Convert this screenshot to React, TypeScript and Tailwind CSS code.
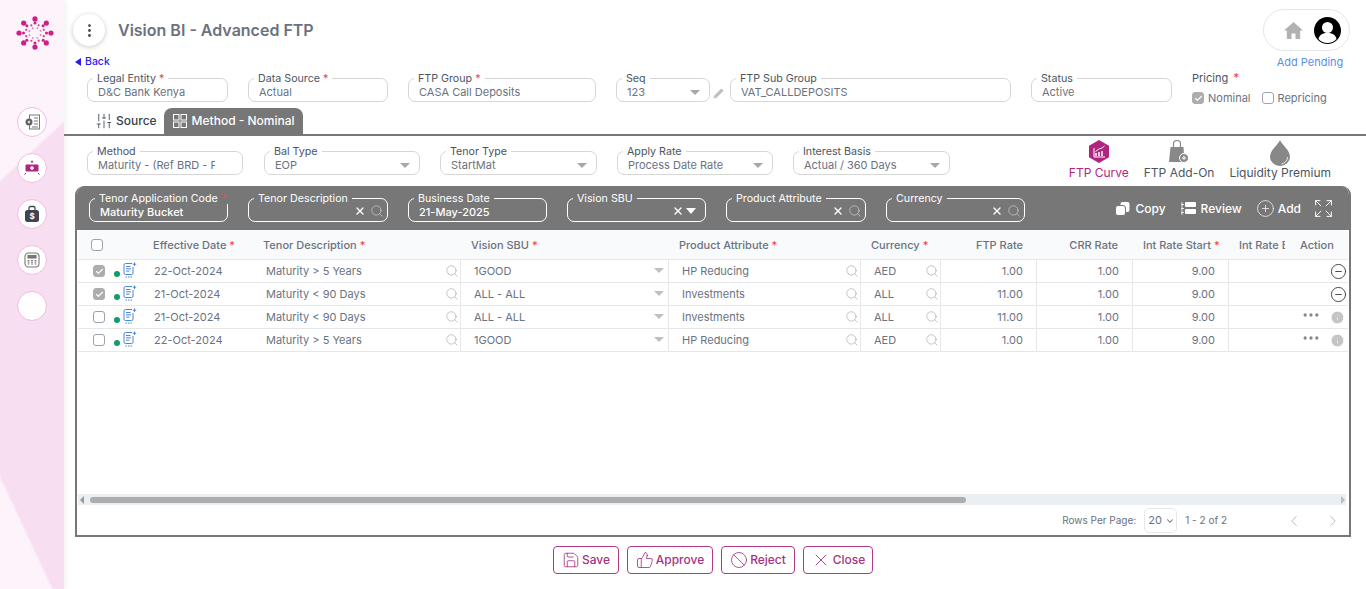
import React from "react";
import { Search, X, Save, ThumbsUp, Ban, ChevronLeft, ChevronRight, ChevronDown, SlidersHorizontal, CirclePlus, Expand, CircleMinus, Ellipsis, Info, Check, EllipsisVertical } from "lucide-react";

const Star = () => <span className="text-[#ef4444] ml-[3px]">*</span>;

function Tri({ className = "" }: { className?: string }) {
  return <span className={`inline-block shrink-0 w-0 h-0 border-x-[5px] border-x-transparent border-t-[5px] border-t-[#a8a8a8] ${className}`} />;
}

function Field({ label, value, req, width, right, dark, tight, className = "" }: { label: string; value?: string; req?: boolean; width: string; right?: React.ReactNode; dark?: boolean; tight?: boolean; className?: string }) {
  return (
    <fieldset className={`${width} h-[29px] border rounded-[7px] shrink-0 pl-[10px] ${tight ? "pr-[3px]" : "pr-[9px]"} min-w-0 relative ${dark ? "border-white" : "border-[#d6d6d6]"} ${className}`}>
      <legend className={`text-[10.7px] leading-[11px] px-[4px] ml-[-5px] whitespace-nowrap ${dark ? "text-white" : "text-[#4b5563]"}`}>
        {label}{req && <Star />}
      </legend>
      <div className={`flex items-center justify-between text-[11px] leading-[14px] mt-[1px] whitespace-nowrap ${dark ? "text-white font-medium" : "text-[#6b7280]"}`}>
        <span className="overflow-hidden min-w-0">{value}&nbsp;</span>
        {right}
      </div>
    </fieldset>
  );
}

const ClearSearch = () => (
  <span className="flex items-center gap-[4px] text-white shrink-0 h-[14px] -mt-[2px]">
    <X size={12} strokeWidth={2.75} />
    <Search size={14} strokeWidth={1} className="text-[#e0e0e0]" />
  </span>
);

function NoteIcon() {
  return (
    <svg width="14" height="16" viewBox="0 0 14 16" fill="none" stroke="#4a86d8" strokeWidth="1" className="block">
      <path d="M9 1.500H2.500A1.500 1.500 0 0 0 1 3v8a1.500 1.500 0 0 0 1.500 1.500h6A1.500 1.500 0 0 0 10 11V5" />
      <path d="M3 4.500h4.500M3 6.800h5M3 9.100h3.500" />
      <path d="M11.500 .5v3.500M9.800 2.200h3.400" />
      <path d="M2.500 15h1.500M5 15h1.500M7.500 15h1.500" />
    </svg>
  );
}

type Row = { date: string; tenor: string; sbu: string; prod: string; cur: string; ftp: string; checked: boolean };
const rows: Row[] = [
  { date: "22-Oct-2024", tenor: "Maturity > 5 Years", sbu: "1GOOD", prod: "HP Reducing", cur: "AED", ftp: "1.00", checked: true },
  { date: "21-Oct-2024", tenor: "Maturity < 90 Days", sbu: "ALL - ALL", prod: "Investments", cur: "ALL", ftp: "11.00", checked: true },
  { date: "21-Oct-2024", tenor: "Maturity < 90 Days", sbu: "ALL - ALL", prod: "Investments", cur: "ALL", ftp: "11.00", checked: false },
  { date: "22-Oct-2024", tenor: "Maturity > 5 Years", sbu: "1GOOD", prod: "HP Reducing", cur: "AED", ftp: "1.00", checked: false },
];

const cols = "grid grid-cols-[67px_111px_205px_208px_192px_80px_96px_96px_96px_56px_63px]";

function Checkbox({ checked }: { checked?: boolean }) {
  return (
    <span className={`w-[12px] h-[12px] rounded-[3px] border flex items-center justify-center shrink-0 ${checked ? "bg-[#adadad] border-[#adadad]" : "bg-white border-[#9ca3af]"}`}>
      {checked && <Check size={9} strokeWidth={3} className="text-white" />}
    </span>
  );
}

function Head({ children, className = "" }: { children: React.ReactNode; className?: string }) {
  return <div className={`text-[11px] text-[#6b7280] font-medium whitespace-nowrap overflow-hidden flex items-center pt-[1px] ${className}`}>{children}</div>;
}

function Lens() {
  return <Search size={14} strokeWidth={0.9} className="text-[#8f8f8f] absolute right-[1px] top-[4px]" />;
}

function SideBtn({ children }: { children?: React.ReactNode }) {
  return <div className="w-[30px] h-[30px] rounded-full border border-[#f5b8e2] bg-white flex items-center justify-center">{children}</div>;
}

function Logo() {
  const big = [0, 45, 90, 135, 180, 225, 270, 315];
  return (
    <svg width="38" height="34" viewBox="-19 -17 38 34" fill="#cf1f87">
      {big.map((a) => {
        const r = (a * Math.PI) / 180;
        const ry = 0.88;
        return (
          <g key={a}>
            <circle cx={Math.cos(r) * 16} cy={Math.sin(r) * 16 * ry} r="2.600" />
            <circle cx={Math.cos(r) * 11.500} cy={Math.sin(r) * 11.500 * ry} r="1.500" />
            <circle cx={Math.cos(r + 0.39) * 9.500} cy={Math.sin(r + 0.39) * 9.500 * ry} r="1.100" fill="#d93d98" />
            <circle cx={Math.cos(r + 0.39) * 6} cy={Math.sin(r + 0.39) * 6 * ry} r="0.900" fill="#e877b8" />
          </g>
        );
      })}
    </svg>
  );
}

function Toolbtn({ icon, label, color = "text-[#4b5563]" }: { icon: React.ReactNode; label: string; color?: string }) {
  return (
    <div className="flex flex-col items-center">
      <div className="h-[26px] flex items-start">{icon}</div>
      <span className={`text-[12px] leading-[14px] whitespace-nowrap ${color}`}>{label}</span>
    </div>
  );
}

function ActBtn({ icon, label, width }: { icon: React.ReactNode; label: string; width: string }) {
  return (
    <button className={`${width} h-[28px] rounded-[4px] border border-[#b03a8c] flex items-center justify-center gap-[2px] text-[12px] text-[#a8327f] font-medium bg-white`}>
      {icon}{label}
    </button>
  );
}

export default function App() {
  return (
    <div className="w-[1366px] h-[589px] overflow-hidden flex bg-white font-['Inter','Liberation_Sans',sans-serif]">
      <aside className="w-[64px] h-full shrink-0 flex flex-col items-center shadow-[2px_0_6px_rgba(0,0,0,0.06)] bg-[linear-gradient(137deg,#fdf3fb_131px,transparent_134px),linear-gradient(245deg,transparent_258px,#fdf3fb_261px),linear-gradient(#f7dff1,#f7dff1)]">
        <div className="mt-[16px] mb-[57px] ml-[6px]"><Logo /></div>
        <div className="flex flex-col gap-[16px]">
          <SideBtn>
            <svg width="18" height="16" viewBox="0 0 18 16">
              <rect x="6.500" y="1" width="10" height="14" fill="#fff" stroke="#777" strokeWidth="1" />
              <path d="M11 4h4M11 7h4M11 10h4M9 13h6" stroke="#777" />
              <circle cx="6" cy="8" r="3.500" fill="#666" />
              <circle cx="6" cy="8" r="1.200" fill="#ddd" />
            </svg>
          </SideBtn>
          <SideBtn>
            <svg width="18" height="18" viewBox="0 0 18 18" fill="#b0267f">
              <rect x="2.500" y="5.500" width="13" height="7" rx="1" />
              <circle cx="9" cy="9" r="1.800" fill="#fff" />
              <path d="M9 1.500v2.500M7.800 2.700h2.400M3 14l-1.500 1.500M15 14l1.500 1.500" stroke="#b0267f" fill="none" />
            </svg>
          </SideBtn>
          <SideBtn>
            <svg width="16" height="18" viewBox="0 0 16 18">
              <path d="M5 5V3a1.500 1.500 0 0 1 1.500-1.500h3A1.500 1.500 0 0 1 11 3v2" fill="none" stroke="#3f4650" strokeWidth="1.300" />
              <rect x="1" y="5" width="14" height="12" rx="2.500" fill="#3f4650" />
              <text x="8" y="14" textAnchor="middle" fontSize="8" fontWeight="700" fill="#fff" fontFamily="Inter">$</text>
            </svg>
          </SideBtn>
          <SideBtn>
            <svg width="16" height="16" viewBox="0 0 16 16" fill="none" stroke="#777" strokeWidth="1.100">
              <rect x="1" y="1" width="14" height="14" rx="3.500" />
              <rect x="4" y="3.500" width="8" height="2.500" fill="#777" />
              <path d="M4.500 8v5M8 8v5M11.500 8v5" strokeWidth="1.800" strokeDasharray="1.400 .8" />
            </svg>
          </SideBtn>
          <SideBtn />
        </div>
      </aside>

      <main className="flex-1 min-w-0 flex flex-col">
        {/* header */}
        <div className="flex h-[78px] shrink-0 pl-[9px] pr-[16px]">
          <div className="flex-1 flex flex-col">
            <div className="flex items-center mt-[14px]">
              <div className="w-[32px] h-[32px] rounded-full bg-white shadow-[0_1px_5px_rgba(0,0,0,0.22)] flex items-center justify-center">
                <EllipsisVertical size={17} className="text-[#444]" />
              </div>
              <h1 className="ml-[13px] text-[16px] font-semibold text-[#6b7280]">Vision BI - Advanced FTP</h1>
            </div>
            <div className="mt-[9px] flex items-center text-[10.5px] leading-[14px] text-[#2a1cf0] font-medium">
              <span className="w-0 h-0 border-y-[4px] border-y-transparent border-r-[6px] border-r-[#2a1cf0] ml-[2px] mr-[4px]" />Back
            </div>
          </div>
          <div className="w-[87px] flex flex-col items-center mt-[9px]">
            <div className="w-[87px] h-[42px] rounded-[21px] border border-[#e5e7eb] flex items-center justify-end pr-[8px] gap-[11px]">
              <svg width="19" height="17" viewBox="0 0 19 17" fill="#b2b2b2"><path d="M9.500 0 0 8.500h2.800V17h4.700v-5.500h4V17h4.700V8.500H19z" /></svg>
              <svg width="27" height="27" viewBox="0 0 27 27">
                <circle cx="13.500" cy="13.500" r="13.500" fill="#000" />
                <circle cx="13.500" cy="10.500" r="5.500" fill="#fff" />
                <path d="M4.500 22c1-4.500 4.500-6 9-6s8 1.500 9 6a12 12 0 0 1-18 0z" fill="#fff" />
              </svg>
            </div>
            <span className="text-[11px] leading-[14px] text-[#5b8fe8] mt-[4px] ml-[7px] whitespace-nowrap">Add Pending</span>
          </div>
        </div>

        {/* form row */}
        <div className="flex h-[33px] shrink-0 pl-[23px] -mt-[5px] items-start">
          <Field label="Legal Entity" req value="D&C Bank Kenya" width="w-[141px]" />
          <Field label="Data Source" req value="Actual" width="w-[140px]" className="ml-[20px]" />
          <Field label="FTP Group" req value="CASA Call Deposits" width="w-[188px]" className="ml-[20px]" />
          <Field label="Seq" value="123" width="w-[94px]" className="ml-[20px]" right={<Tri />} />
          <svg width="11" height="11" viewBox="0 0 11 11" className="ml-[3px] mt-[15px] shrink-0" fill="#c0c0c0">
            <path d="M8.300.4 10.600 2.700 3.600 9.700.4 10.600 1.300 7.400z" />
          </svg>
          <Field label="FTP Sub Group" value="VAT_CALLDEPOSITS" width="w-[281px]" className="ml-[6px]" />
          <Field label="Status" value="Active" width="w-[141px]" className="ml-[20px]" />
          <div className="ml-[20px] -mt-[2px] flex flex-col">
            <span className="text-[11px] leading-[14px] text-[#4b5563]">Pricing <span className="text-[#ef4444] text-[12px] ml-[2px]">*</span></span>
            <div className="flex items-center mt-[6px] text-[11px] leading-[14px] text-[#6b7280]">
              <Checkbox checked />
              <span className="ml-[4px]">Nominal</span>
              <span className="ml-[11px]"><Checkbox /></span>
              <span className="ml-[4px]">Repricing</span>
            </div>
          </div>
        </div>

        {/* tabs */}
        <div className="flex items-end h-[30px] shrink-0 border-b-2 border-[#777] pl-[31px]">
          <div className="flex items-center h-[26px] gap-[3px] text-[12px] text-[#374151] font-medium">
            <SlidersHorizontal size={18} strokeWidth={1.1} className="rotate-90" />Source
          </div>
          <div className="ml-[7px] h-[26px] w-[139px] rounded-t-[8px] bg-[#777] flex items-center pl-[9px] gap-[5px] text-[12px] text-white font-medium">
            <svg width="14" height="14" viewBox="0 0 14 14" fill="none" stroke="#fff" strokeWidth="1"><rect x=".5" y=".5" width="5.500" height="5.500" /><rect x="8" y=".5" width="5.500" height="5.500" /><rect x=".5" y="8" width="5.500" height="5.500" /><rect x="8" y="8" width="5.500" height="5.500" /></svg>
            Method - Nominal
          </div>
        </div>

        {/* method row */}
        <div className="flex items-start h-[50px] shrink-0 pl-[23px] pr-[35px]">
          <div className="flex items-start mt-[10px]">
            <Field label="Method" value="Maturity - (Ref BRD - F" width="w-[156px]" right={<span className="w-[18px] shrink-0" />} />
            <Field label="Bal Type" value="EOP" width="w-[156px]" className="ml-[21px]" right={<Tri />} />
            <Field label="Tenor Type" value="StartMat" width="w-[157px]" className="ml-[20px]" right={<Tri />} />
            <Field label="Apply Rate" value="Process Date Rate" width="w-[156px]" className="ml-[20px]" right={<Tri />} />
            <Field label="Interest Basis" value="Actual / 360 Days" width="w-[157px]" className="ml-[20px]" right={<Tri />} />
          </div>
          <div className="flex ml-auto mt-[4px] gap-[15px]">
            <Toolbtn
              color="text-[#b0267f]"
              label="FTP Curve"
              icon={
                <svg width="20" height="23" viewBox="0 0 20 23">
                  <path d="M10 0 20 5.700v11.600L10 23 0 17.300V5.700z" fill="#b0267f" />
                  <path d="M5 8v9h11" fill="none" stroke="#fff" />
                  <path d="M7 16v-3M10 16v-4M13 16v-5" stroke="#fff" strokeWidth="1.500" />
                  <path d="M6.500 11.500 10 9l3-1 2.500-2" fill="none" stroke="#fff" strokeWidth=".9" />
                </svg>
              }
            />
            <Toolbtn
              label="FTP Add-On"
              icon={
                <svg width="20" height="23" viewBox="0 0 20 23">
                  <path d="M4.500 7V4a3.500 3.500 0 0 1 7 0v3" fill="none" stroke="#888" strokeWidth="1.200" />
                  <path d="M1.500 7h13l1 15H0z" fill="#888" />
                  <circle cx="15" cy="18" r="4.500" fill="#888" stroke="#fff" />
                  <path d="M12.800 18h4.400M15 15.800v4.400" stroke="#fff" />
                </svg>
              }
            />
            <Toolbtn
              label="Liquidity Premium"
              icon={
                <svg width="20" height="26" viewBox="0 0 20 26">
                  <path d="M10 0c2 5 10 10 10 17a10 9 0 0 1-20 0C0 10 8 5 10 0z" fill="#888" />
                  <path d="M17.500 17a7.500 7 0 0 1-6 7" fill="none" stroke="#fff" strokeWidth=".8" />
                </svg>
              }
            />
          </div>
        </div>

        {/* grid card */}
        <div className="ml-[11px] mr-[15px] h-[351px] shrink-0 rounded-t-[9px] border-2 border-t-0 border-[#777] bg-white flex flex-col overflow-hidden">
          <div className="h-[44px] shrink-0 bg-[#777] flex items-start pl-[12px] pr-[15px] pt-[7px]">
            <Field dark label="Tenor Application Code" req value="Maturity Bucket" width="w-[139px]" />
            <Field dark tight label="Tenor Description" width="w-[140px]" className="ml-[20px]" right={<ClearSearch />} />
            <Field dark label="Business Date" value="21-May-2025" width="w-[139px]" className="ml-[20px]" />
            <Field dark label="Vision SBU" width="w-[139px]" className="ml-[20px]" right={
              <span className="flex items-center gap-[2px] shrink-0 h-[14px] -mt-[2px]"><X size={12} strokeWidth={2.75} className="text-white" /><span className="w-0 h-0 border-x-[5px] border-x-transparent border-t-[6px] border-t-white" /></span>
            } />
            <Field dark tight label="Product Attribute" width="w-[140px]" className="ml-[20px]" right={<ClearSearch />} />
            <Field dark tight label="Currency" width="w-[139px]" className="ml-[20px]" right={<ClearSearch />} />
            <div className="flex items-center ml-auto mt-[5px] h-[21px] text-[12px] text-white font-medium">
              <svg width="15" height="14" viewBox="0 0 15 14" className="mr-[5px]">
                <rect x="5.500" y="0" width="9" height="10" rx="2" fill="#fff" />
                <rect x=".5" y="3.500" width="10" height="10" rx="2.500" fill="#fff" stroke="#777" />
              </svg>
              Copy
              <svg width="15" height="13" viewBox="0 0 15 13" fill="#fff" className="ml-[15px] mr-[5px]"><rect x="4" y="0" width="11" height="5" rx="1" /><rect x="4" y="7" width="11" height="5" rx="1" /><path d="M1 0v13M0 2.500h3M0 6.500h3M0 10.500h3" stroke="#fff" fill="none" strokeWidth=".8" /></svg>
              Review
              <CirclePlus size={19} strokeWidth={0.9} className="ml-[14px] mr-[3px]" />
              Add
              <Expand size={21} strokeWidth={1.1} className="ml-[12px]" />
            </div>
          </div>

          <div className="flex-1 min-h-0 overflow-hidden ml-[1px]">
            <div className={`${cols} h-[30px] bg-[#f9fafb] border-b border-[#e5e7eb] rounded-t-[4px] w-[1270px]`}>
              <div className="flex items-center pl-[13px]"><Checkbox /></div>
              <Head className="pl-[8px]">Effective Date<Star /></Head>
              <Head className="pl-[7px]">Tenor Description<Star /></Head>
              <Head className="pl-[10px]">Vision SBU<Star /></Head>
              <Head className="pl-[10px]">Product Attribute<Star /></Head>
              <Head className="pl-[10px]">Currency<Star /></Head>
              <Head className="justify-end pr-[14px]">FTP Rate</Head>
              <Head className="justify-end pr-[15px]">CRR Rate</Head>
              <Head className="pl-[10px]">Int Rate Start<Star /></Head>
              <Head className="pl-[10px]">Int Rate End</Head>
              <Head className="pl-[15px]">Action</Head>
            </div>
            {rows.map((r, i) => (
              <div key={i} className={`${cols} h-[23px] border-b border-[#e5e7eb] text-[11px] text-[#6b7280] w-[1270px]`}>
                <div className="flex items-center pl-[15px]">
                  <Checkbox checked={r.checked} />
                  <span className="w-[6px] h-[6px] rounded-full bg-[#0f9d6b] ml-[9px] mt-[5px]" />
                  <span className="ml-[3px] -mt-[2px]"><NoteIcon /></span>
                </div>
                <div className="flex items-center pl-[9px]">{r.date}</div>
                <div className="flex items-center pl-[10px] relative border-r border-[#e5e7eb]">{r.tenor}<Lens /></div>
                <div className="flex items-center pl-[13px] relative border-r border-[#e5e7eb]">
                  {r.sbu}<Tri className="absolute right-[4px] top-[8px] !border-t-[#c0c0c0]" />
                </div>
                <div className="flex items-center pl-[13px] relative border-r border-[#e5e7eb]">{r.prod}<Lens /></div>
                <div className="flex items-center pl-[13px] relative border-r border-[#e5e7eb]">{r.cur}<Lens /></div>
                <div className="flex items-center justify-end pr-[13px] border-r border-[#e5e7eb]">{r.ftp}</div>
                <div className="flex items-center justify-end pr-[13px] border-r border-[#e5e7eb]">1.00</div>
                <div className="flex items-center justify-end pr-[13px] border-r border-[#e5e7eb]">9.00</div>
                <div />
                <div className="flex items-center justify-end">
                  {r.checked ? (
                    <CircleMinus size={17} strokeWidth={1.25} className="text-[#333] mr-[1px]" />
                  ) : (
                    <span className="flex items-center gap-[9px] mr-[3px]">
                      <Ellipsis size={20} strokeWidth={2} className="text-[#888] -mt-[4px]" />
                      <Info size={15} fill="#c4c4c4" strokeWidth={1} className="text-white" />
                    </span>
                  )}
                </div>
              </div>
            ))}
          </div>

          {/* scrollbar */}
          <div className="h-[11px] shrink-0 ml-[1px] mr-[3px] bg-[#eaeff4] flex items-center pl-[12px] relative">
            <span className="absolute left-[2px] w-0 h-0 border-y-[4px] border-y-transparent border-r-[4px] border-r-[#9a9a9a]" />
            <div className="w-[876px] h-[6px] rounded-full bg-[#adadad]" />
            <span className="absolute right-[1px] w-0 h-0 border-y-[4px] border-y-transparent border-l-[4px] border-l-[#bcbcbc]" />
          </div>

          <div className="h-[30px] shrink-0 flex items-center justify-end text-[10px] text-[#6b7280] pt-[1px]">
            <span>Rows Per Page:</span>
            <span className="ml-[8px] w-[33px] h-[25px] rounded-[5px] border border-[#e5e7eb] flex items-center pl-[3px] gap-[3px] text-[11px]">20<ChevronDown size={10} strokeWidth={2.5} /></span>
            <span className="ml-[8px]">1 - 2 of 2</span>
            <ChevronLeft size={18} strokeWidth={1} className="ml-[58px] text-[#9ca3af]" />
            <ChevronRight size={18} strokeWidth={1} className="ml-[21px] mr-[7px] text-[#9ca3af]" />
          </div>
        </div>

        {/* actions */}
        <div className="flex justify-center gap-[8px] mt-[9px] pr-[4px]">
          <ActBtn width="w-[66px]" label="Save" icon={<Save size={18} strokeWidth={1.1} />} />
          <ActBtn width="w-[86px]" label="Approve" icon={<ThumbsUp size={18} strokeWidth={1.1} />} />
          <ActBtn width="w-[74px]" label="Reject" icon={<Ban size={18} strokeWidth={1.1} />} />
          <ActBtn width="w-[70px]" label="Close" icon={<X size={20} strokeWidth={1.1} />} />
        </div>
      </main>
    </div>
  );
}
